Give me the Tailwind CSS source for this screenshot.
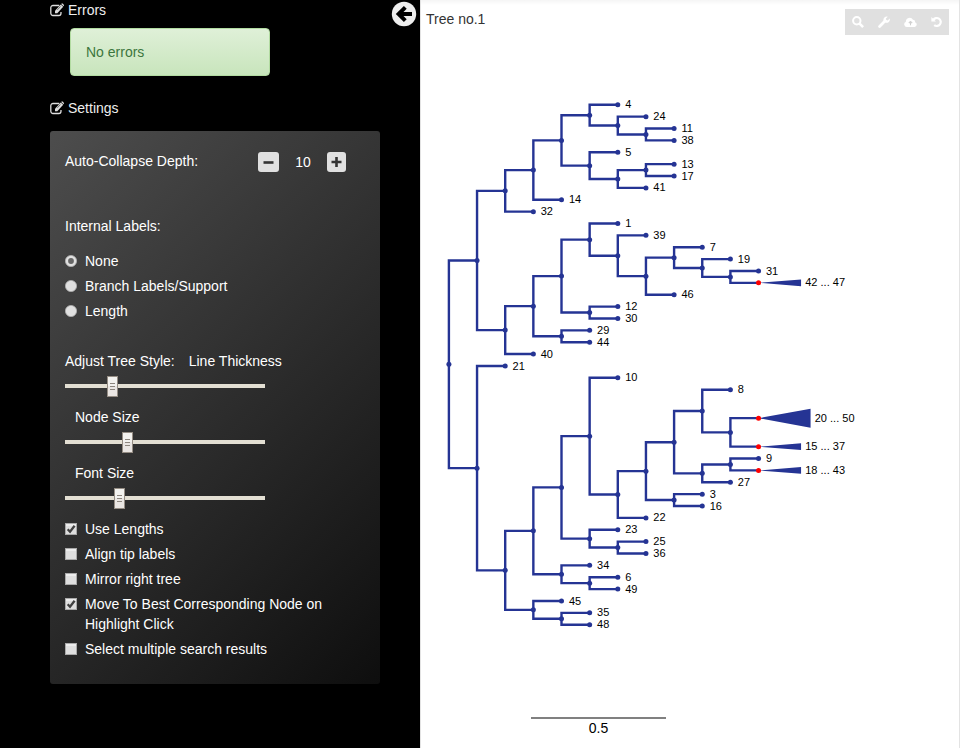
<!DOCTYPE html>
<html lang="en">
<head>
<meta charset="utf-8">
<title>Tree viewer</title>
<script src="https://cdn.jsdelivr.net/npm/@tailwindcss/browser@4"></script>
</head>
<body class="flex h-[748px] w-[960px] overflow-hidden bg-white font-['Liberation_Sans',Arial,sans-serif] text-sm">
<svg class="hidden">
  <symbol id="edit" viewBox="0 0 14 14"><path d="M9.3 2.5H3A2.2 2.2 0 0 0 .8 4.700v5.600A2.200 2.200 0 0 0 3 12.500h5.800a2.200 2.200 0 0 0 2.200-2.200V9" fill="none" stroke="currentColor" stroke-width="1.300"/><path d="M5 10.300V7.700L10.800 1.500l2.400 2.300-5.900 6.500z" fill="currentColor"/><path d="M11.200 1.100l.5-.5q.5-.4 1 0l1.100 1.100q.4.500 0 1l-.4.500z" fill="currentColor"/><path d="M7.300 6.900l3.200-3.400" stroke="#000" stroke-width=".5"/></symbol>
  <symbol id="box" viewBox="0 0 12 12"><rect width="12" height="12" fill="#a9a9a9"/><rect x="1" y="1" width="10" height="10" fill="#dedede"/><rect x="1" y="1" width="10" height="2" fill="#ececec"/></symbol>
  <symbol id="boxon" viewBox="0 0 12 12"><use href="#box"/><path d="M2.700 6.300 5 8.700 9.600 2.800" fill="none" stroke="#404040" stroke-width="2.300"/></symbol>
  <symbol id="radio" viewBox="0 0 12 12"><circle cx="6" cy="6" r="5.600" fill="#e0e0e0" stroke="#b0b0b0" stroke-width=".8"/></symbol>
</svg>

<aside class="flex w-[420px] shrink-0 bg-black pl-[50px] text-white">
  <div class="w-[330px]">
    <h2 class="flex h-5 items-center gap-1 text-[#eee]"><svg class="h-3.5 w-3.5 text-[#ddd]"><use href="#edit"/></svg>Errors</h2>
    <div class="mt-2 ml-5 flex h-12 w-[200px] items-center rounded border border-[#b2dba1] bg-linear-to-b from-[#dff0d8] to-[#c8e5bc] px-[15px] text-[#3c763d]">No errors</div>
    <h2 class="mt-[22px] flex h-5 items-center gap-1 text-[#eee]"><svg class="h-3.5 w-3.5 text-[#ddd]"><use href="#edit"/></svg>Settings</h2>
    <section class="mt-[13px] h-[553px] rounded-[3px] bg-linear-[135deg] from-[#4d4d4d] to-[#0e0e0e] px-[15px] pt-5 leading-5">
      <div class="flex h-[22px] items-start">
        <span class="w-[193px]">Auto-Collapse Depth:</span>
        <button class="mt-px flex h-5 w-[21px] items-center justify-center rounded-[3px] bg-[#e0e0e0]"><svg width="11" height="11"><path d="M.5 5.500h10" stroke="#333" stroke-width="2.600"/></svg></button>
        <span class="mt-px w-12 text-center">10</span>
        <button class="mt-px flex h-5 w-[19px] items-center justify-center rounded-[3px] bg-[#e0e0e0]"><svg width="11" height="11"><path d="M.5 5h10M5.500 0v10" stroke="#333" stroke-width="2.600"/></svg></button>
      </div>
      <div class="mt-[43px]">Internal Labels:</div>
      <div class="mt-[15px] flex flex-col gap-[5px]">
        <label class="flex items-center gap-2"><svg width="12" height="12"><use href="#radio"/><circle cx="6" cy="6" r="2.900" fill="#666"/></svg>None</label>
        <label class="flex items-center gap-2"><svg width="12" height="12"><use href="#radio"/></svg>Branch Labels/Support</label>
        <label class="flex items-center gap-2"><svg width="12" height="12"><use href="#radio"/></svg>Length</label>
      </div>
      <div class="mt-[30px] flex gap-3.5"><span>Adjust Tree Style:</span><span>Line Thickness</span></div>
      <svg class="mt-[5px] block" width="200" height="21"><path d="M0 10h200" stroke="#e3dfd3" stroke-width="4"/><use href="#thumb" x="42"/></svg>
      <div class="mt-[10px] pl-[10px]">Node Size</div>
      <svg class="mt-[5px] block" width="200" height="21"><path d="M0 10h200" stroke="#e3dfd3" stroke-width="4"/><use href="#thumb" x="57"/></svg>
      <div class="mt-[10px] pl-[10px]">Font Size</div>
      <svg class="mt-[5px] block" width="200" height="21"><path d="M0 10h200" stroke="#e3dfd3" stroke-width="4"/><use href="#thumb" x="49"/></svg>
      <div class="mt-[10px] flex flex-col gap-[5px]">
        <label class="flex items-start gap-2"><svg class="mt-1" width="12" height="12"><use href="#boxon"/></svg>Use Lengths</label>
        <label class="flex items-start gap-2"><svg class="mt-1" width="12" height="12"><use href="#box"/></svg>Align tip labels</label>
        <label class="flex items-start gap-2"><svg class="mt-1" width="12" height="12"><use href="#box"/></svg>Mirror right tree</label>
        <label class="flex items-start gap-2"><svg class="mt-1 shrink-0" width="12" height="12"><use href="#boxon"/></svg><span>Move To Best Corresponding Node on<br>Highlight Click</span></label>
        <label class="flex items-start gap-2"><svg class="mt-1" width="12" height="12"><use href="#box"/></svg>Select multiple search results</label>
      </div>
    </section>
  </div>
  <svg class="mt-px ml-[11px] h-[26px] w-[26px] shrink-0" viewBox="0 0 26 26"><circle cx="13" cy="13" r="12.200" fill="#eee"/><path d="M21 13H7M14.300 6.300 7.600 13l6.700 6.700" fill="none" stroke="#000" stroke-width="4"/></svg>
</aside>

<svg class="hidden"><g id="thumb"><rect x=".5" y=".5" width="10" height="20" fill="#eae6e3" stroke="#958d84"/><rect x="1" y="1" width="9" height="9" fill="#f3f2ef"/><path d="M3 7.500h5M3 10.500h5M3 13.500h5" stroke="#8d867e"/></g></svg>

<main class="relative flex h-[748px] w-[540px] flex-col border-r border-l border-r-[#e3e3e3] border-l-[#e3e3e3] bg-linear-to-b from-[#f5f5f5] to-white to-[5px]">
  <header class="flex h-10 justify-between pr-[10px] pl-[5px]">
    <h1 class="mt-[9px] leading-5 text-[#333]">Tree no.1</h1>
    <div class="mt-[9px] flex h-[26px] w-[104px] items-center justify-around bg-[#e0e0e0] text-white">
      <svg width="12" height="12" viewBox="0 0 12 12" fill="none" stroke="#fff"><circle cx="4.800" cy="4.800" r="3.700" stroke-width="2"/><path d="M7.600 7.600l3.500 3.500" stroke-width="2.600"/></svg>
      <svg width="12" height="12" viewBox="0 0 12 12"><path d="M1.600 10.400 7.200 4.800" stroke="#fff" stroke-width="2.800" stroke-linecap="round"/><path d="M9.800.7 7.900 2.600l.3 1.500 1.500.3 2-1.900q.6 2.200-.9 3.500-1.500 1.300-3.500.6L5.600 4.800q-.6-2 .8-3.400Q7.800.1 9.800.7z" fill="#fff"/></svg>
      <svg width="13" height="11" viewBox="0 0 13 11"><path d="M2.800 9.900a2.700 2.700 0 0 1-.9-5.200A3.800 3.800 0 0 1 9 2.700 2.100 2.100 0 0 1 11 5.200a2.400 2.400 0 0 1-.5 4.700z" fill="#fff"/><path d="M6.500 8.300V5M4.900 5.800 6.500 4.100l1.600 1.700z" fill="#d8d8d8" stroke="#d0d0d0"/></svg>
      <svg width="11" height="12" viewBox="0 0 11 12" fill="none" stroke="#fff"><path d="M2.300 3.900A4 4 0 1 1 3.200 9.100" stroke-width="2.200"/><path d="M.4 1v4.500h4.500z" fill="#fff" stroke="none"/></svg>
    </div>
  </header>
  <svg id="tree" class="block h-[660px] w-[538px]" viewBox="421 40 538 660"></svg>
  <div class="mt-[17px] ml-[110px] w-[135px] border-t-2 border-[#808080] text-center leading-[18px] text-black">0.5</div>
</main>

<script>
const root = [
  [[[[[4,[24,[11,38]]],[5,[[13,17],41]]],14],32],
   [[[[1,[39,[[7,[19,[31,'42 ... 47']]],46]]],[12,30]],[29,44]],40]],
  [21,[[[[10,[[[[8,['20 ... 50','15 ... 37']],[[9,'18 ... 43'],27]],[3,16]],22]],[23,[25,36]]],[34,[6,49]]],[45,[35,48]]]]
];
let row = 0;
const lines = [], marks = [];
function place(n, d) {
  const x = 448.9 + 28.15 * d;
  let y;
  if (Array.isArray(n)) {
    const ys = n.map(c => place(c, d + 1));
    y = (ys[0] + ys[1]) / 2;
    ys.forEach(c => lines.push(`<path d="M${x} ${y}V${c}H${x + 28.15}"/>`));
    marks.push(`<circle cx="${x}" cy="${y}" r="2.5" fill="#253494"/>`);
  } else {
    const big = n === '20 ... 50', clade = typeof n === 'string';
    if (big) row += 1.4;
    y = 104.8 + 11.87 * row;
    row += big ? 2.4 : 1;
    let tx = x + 7.4;
    if (clade) {
      const w = big ? 52 : 42.5, h = big ? 9.5 : 3.3;
      marks.push(`<path d="M${x} ${y}l${w} ${-h}v${2 * h}z" fill="#253494"/>`);
      tx = x + w + 4.2;
    }
    marks.push(`<circle cx="${x}" cy="${y}" r="2.5" fill="${clade ? '#f00' : '#253494'}"/><text x="${tx}" y="${y + 3.6}">${n}</text>`);
  }
  return y;
}
place(root, 0);
document.getElementById('tree').innerHTML =
  `<g fill="none" stroke="#253494" stroke-width="2.4">${lines.join('')}</g><g font-size="11" fill="#000">${marks.join('')}</g>`;
</script>
</body>
</html>
